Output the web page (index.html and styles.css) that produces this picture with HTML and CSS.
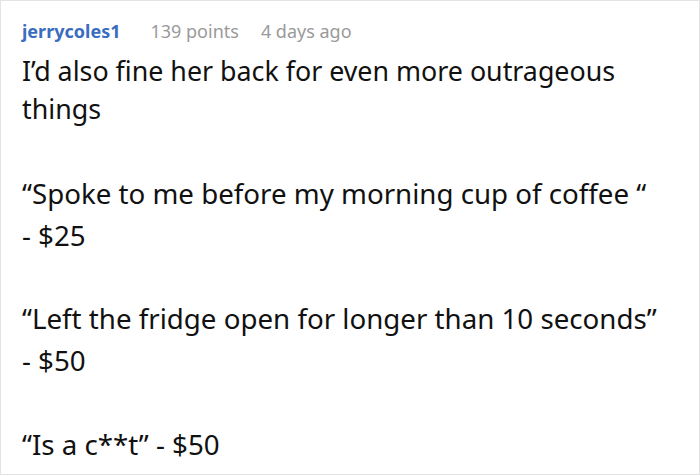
FILE: index.html
```html
<!DOCTYPE html>
<html>
<head>
<meta charset="utf-8">
<link rel="stylesheet" href="styles.css">
</head>
<body>
<div class="comment">
  <div class="meta">
    <span class="user">jerrycoles1</span>
    <span class="points">139 points</span>
    <span class="time">4 days ago</span>
  </div>
  <div class="text">
    <p class="lead">I’d also fine her back for even more outrageous things</p>
    <p>“Spoke to me before my morning cup of coffee “<br>- $25</p>
    <p>“Left the fridge open for longer than 10 seconds”<br>- $50</p>
    <p>“Is a c**t” - $50</p>
  </div>
</div>
</body>
</html>
```
FILE: styles.css
```css
html, body {
  margin: 0;
  padding: 0;
  background: #fff;
}
.comment {
  box-sizing: border-box;
  width: 700px;
  height: 475px;
  border: 1px solid #e3e3e3;
  padding: 17px 20px 0 21px;
  font-family: "Noto Sans", "Open Sans", sans-serif;
  overflow: hidden;
}
.meta {
  display: flex;
  gap: 22px;
  font-size: 18px;
  line-height: 26px;
  color: #9a9a9a;
}
.user {
  color: #3a6cbf;
  font-weight: 700;
  margin-right: 8px;
}
.text {
  color: #111;
  font-size: 27.7px;
  line-height: 41.8px;
}
.text p {
  margin: 0 0 41.8px;
}
.text .lead {
  font-size: 26.8px;
  line-height: 38px;
  margin: 7.5px 0 45.5px;
}
```
